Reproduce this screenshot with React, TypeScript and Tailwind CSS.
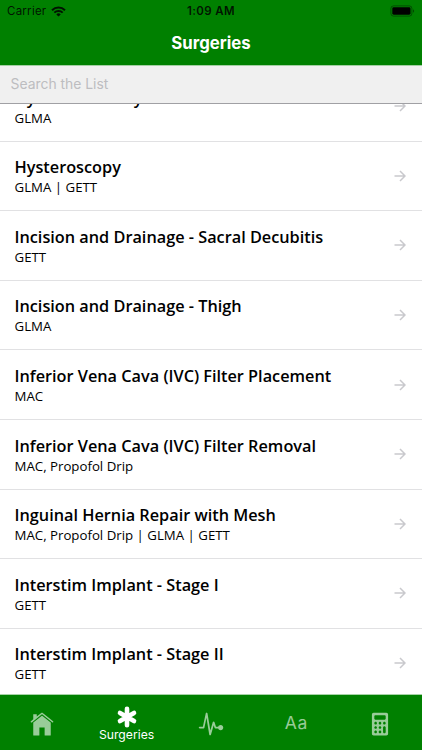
import { IoIosCalculator, IoIosHome, IoIosPulse } from 'react-icons/io';

interface Surgery {
  name: string;
  anesthesia: string;
}

const SURGERIES: Surgery[] = [
  { name: 'Hydrocelectomy', anesthesia: 'GLMA' },
  { name: 'Hysteroscopy', anesthesia: 'GLMA | GETT' },
  { name: 'Incision and Drainage - Sacral Decubitis', anesthesia: 'GETT' },
  { name: 'Incision and Drainage - Thigh', anesthesia: 'GLMA' },
  { name: 'Inferior Vena Cava (IVC) Filter Placement', anesthesia: 'MAC' },
  { name: 'Inferior Vena Cava (IVC) Filter Removal', anesthesia: 'MAC, Propofol Drip' },
  { name: 'Inguinal Hernia Repair with Mesh', anesthesia: 'MAC, Propofol Drip | GLMA | GETT' },
  { name: 'Interstim Implant - Stage I', anesthesia: 'GETT' },
  { name: 'Interstim Implant - Stage II', anesthesia: 'GETT' },
];

function StatusBar() {
  return (
    <div className="grid h-[22px] grid-cols-3 items-center px-[7px] pt-px text-[11.5px] text-black/85">
      <div className="flex items-center gap-[5px]">
        <span className="tracking-[0.25px]">Carrier</span>
        <svg className="-mt-px h-[11px] w-[15px]" viewBox="0 0 15 11" fill="none" stroke="currentColor" strokeWidth="2">
          <path d="M1 4.2a9.4 9.4 0 0 1 13 0M3.3 6.6a6 6 0 0 1 8.4 0" />
          <path d="M7.5 10.6 5.3 8.4a3.1 3.1 0 0 1 4.4 0z" fill="currentColor" stroke="none" />
        </svg>
      </div>
      <span className="text-center font-semibold tracking-[0.4px]">1:09 AM</span>
      <svg className="-mt-px h-[12px] w-[25px] justify-self-end" viewBox="0 0 25 12">
        <rect x="0.9" y="0.9" width="21" height="10.2" rx="2.6" fill="none" stroke="currentColor" strokeOpacity="0.45" />
        <rect x="2.3" y="2.3" width="18.2" height="7.4" rx="1.4" fill="#000" />
        <path d="M23 4.2v3.6c.8-.4 1.2-1 1.2-1.8S23.8 4.6 23 4.2z" fill="currentColor" fillOpacity="0.5" />
      </svg>
    </div>
  );
}

function SurgeryRow({ name, anesthesia }: Surgery) {
  return (
    <li className="flex h-[69.6px] shrink-0 items-center border-b border-[#e1e1e3] pr-[16px] pl-[14.5px]">
      <div className="min-w-0 flex-1 pt-[2.5px] whitespace-nowrap text-black">
        <div className="text-[16.28px] leading-[21px] font-semibold">{name}</div>
        <div className="text-[13.25px] leading-[19px]">{anesthesia}</div>
      </div>
      <svg className="h-[12px] w-[12px] shrink-0" viewBox="0 0 12 12" fill="none" stroke="#c9c9cd" strokeWidth="1.5">
        <path d="M0.5 6h10.500M6 1 11 6l-5 5" />
      </svg>
    </li>
  );
}

function AsteriskIcon() {
  return (
    <svg className="h-[22px] w-[22px]" viewBox="0 0 22 22" stroke="currentColor" strokeWidth="4.6" strokeLinecap="round">
      <path d="M11 2.8v16.4M4 7l14 8M18 7 4 15" />
    </svg>
  );
}

function TabBar() {
  return (
    <nav className="grid h-[56px] shrink-0 grid-cols-5 items-center border-t border-[#a6d3a6] bg-[#008000] font-[Inter,sans-serif] text-white/60">
      <IoIosHome className="mt-[2px] size-7 justify-self-center" />
      <div className="flex flex-col items-center pt-[3px] text-white">
        <AsteriskIcon />
        <span className="text-[12.2px] leading-[14px]">Surgeries</span>
      </div>
      <IoIosPulse className="mt-[2px] size-7 justify-self-center" />
      <span className="pt-[2px] pl-[2px] text-center text-[17.5px] tracking-[0.8px]">Aa</span>
      <IoIosCalculator className="mt-[2px] size-7 justify-self-center" />
    </nav>
  );
}

export default function App() {
  return (
    <div className="flex h-[750px] w-[422px] flex-col overflow-hidden bg-white font-['Open_Sans',sans-serif]">
      <header className="h-[66px] shrink-0 border-b border-[#a3cfa3] bg-[#008000] font-[Inter,sans-serif]">
        <StatusBar />
        <h1 className="text-center text-[16.8px] leading-[43px] font-bold text-white">Surgeries</h1>
      </header>
      <input
        className="h-[38px] shrink-0 border-b border-[#a0a0a4] bg-[#f0f0f0] px-[10.5px] pb-px font-[Inter,sans-serif] text-[13.9px] placeholder:text-[#bdbdc0]"
        placeholder="Search the List"
      />
      <main className="min-h-0 flex-1 overflow-hidden">
        <ul className="-mt-[32px] flex flex-col">
          {SURGERIES.map((surgery) => (
            <SurgeryRow key={surgery.name} {...surgery} />
          ))}
        </ul>
      </main>
      <TabBar />
    </div>
  );
}
